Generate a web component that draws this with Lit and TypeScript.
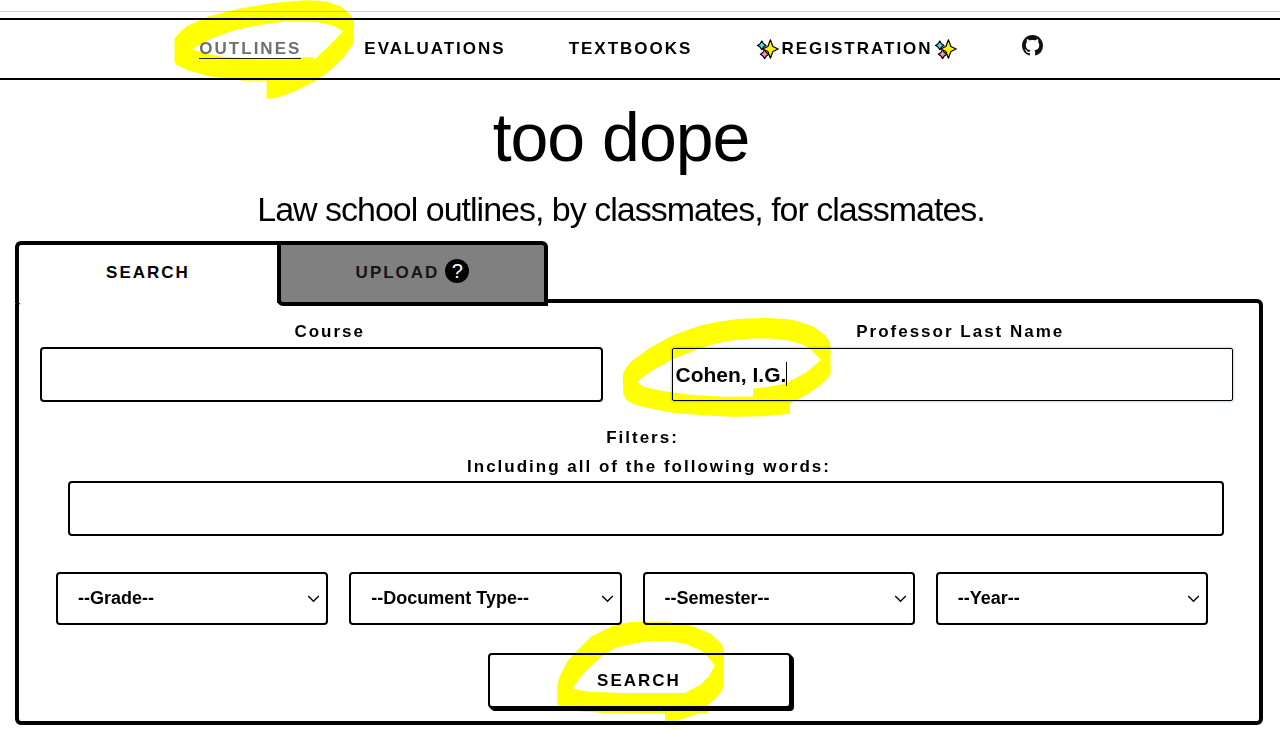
import { LitElement, html, css, svg } from "lit";
import { customElement } from "lit/decorators.js";

const outline = (points: number[][]) => "M" + points.map((p) => p.join(" ")).join("L") + "Z";

const MARKS: Record<string, string> = {
  outlines:
    outline([[39,116],[56,96],[75,80],[105,65],[140,50],[190,37],[240,25],[330,10],[430,1],[470,2],[500,6],[540,20],[570,45],[578,62],[577,132],[550,170],[510,210],[470,240],[400,275],[350,293],[335,296],[316,296],[316,243],[240,243],[240,240],[150,231],[80,212],[45,195],[39,187]]) +
    outline([[92,148],[140,120],[200,97],[250,84],[310,73],[370,65],[420,64],[480,68],[520,79],[547,94],[520,122],[500,142],[460,179],[455,172],[400,172],[370,177],[300,179],[250,175],[180,170],[130,160]]),
  professor:
    outline([[67,208],[78,187],[92,170],[150,128],[220,90],[300,62],[350,51],[410,42],[500,39],[545,41],[580,45],[640,65],[675,90],[688,108],[692,125],[692,208],[670,235],[620,270],[570,296],[570,328],[540,330],[490,335],[400,336],[330,333],[220,325],[130,308],[98,298],[80,287],[68,268]]) +
    outline([[110,232],[150,200],[220,162],[300,130],[350,115],[400,106],[450,101],[510,101],[560,106],[600,116],[630,130],[663,165],[620,202],[580,224],[540,240],[500,247],[459,252],[459,275],[370,276],[270,270],[180,258],[130,246]]),
  search:
    outline([[258,230],[264,203],[275,180],[290,152],[310,130],[360,80],[420,50],[450,41],[480,36],[590,35],[620,41],[660,47],[720,72],[750,100],[758,115],[760,135],[759,225],[752,245],[740,260],[712,285],[712,310],[680,312],[620,333],[582,333],[582,311],[400,310],[300,303],[258,285]]) +
    outline([[304,237],[320,212],[340,187],[390,140],[430,115],[490,100],[550,93],[600,95],[640,101],[690,122],[715,145],[732,168],[715,198],[690,224],[642,250],[450,250],[350,246]]),
};

const mark = (name: string) => html`
  <svg class="mark mark-${name}" viewBox="0 0 800 340" aria-hidden="true">
    <path fill="#ff0" fill-rule="evenodd" d=${MARKS[name]} />
  </svg>
`;

const star = (cx: number, cy: number, rx: number, ry: number, k: number, fill: string) => {
  const d = `M${cx} ${cy - ry}L${cx + k} ${cy - k}L${cx + rx} ${cy}L${cx + k} ${cy + k}L${cx} ${cy + ry}L${cx - k} ${cy + k}L${cx - rx} ${cy}L${cx - k} ${cy - k}Z`;
  return svg`<path d=${d} fill=${fill} stroke="#000" stroke-width="1.2" stroke-linejoin="round" />`;
};

const sparkles = () => html`
  <svg class="sparkles" viewBox="0 0 22 22" aria-hidden="true">
    ${star(4.8, 7.4, 4.2, 4.4, 1.7, "#4fe0f5")} ${star(7.6, 16.2, 4.2, 4.4, 1.7, "#ff8fb8")}
    ${star(13.4, 11, 7.8, 9.2, 2.5, "#fff200")}
  </svg>
`;

@customElement("app-root")
export class AppRoot extends LitElement {
  static styles = css`
    :host {
      display: block;
      background: #fff;
      color: #000;
      font-family: "Liberation Sans", Arial, sans-serif;
      font-size: 17px;
      font-weight: 700;
      line-height: 30px;
    }
    * {
      box-sizing: border-box;
    }
    .topline {
      height: 12px;
      border-bottom: 1px solid #d4d4d4;
      margin-bottom: 6px;
    }
    .nav {
      display: flex;
      justify-content: center;
      align-items: center;
      gap: 63px;
      height: 62px;
      padding-right: 38px;
      border-top: 2px solid #000;
      border-bottom: 2px solid #000;
      letter-spacing: 2px;
    }
    .link {
      position: relative;
      display: flex;
      align-items: center;
      color: #000;
      text-decoration: none;
    }
    .current {
      color: #707070;
    }
    .current-text {
      line-height: 18px;
      border-bottom: 1px solid #222;
    }
    .sparkles {
      width: 22px;
      height: 22px;
      margin: 0 2px;
    }
    .github {
      display: block;
      width: 21px;
      height: 21px;
      margin-bottom: 8px;
    }
    .mark {
      position: absolute;
      width: 267px;
      height: 113px;
      overflow: visible;
      pointer-events: none;
      mix-blend-mode: multiply;
    }
    .mark-outlines {
      left: -38px;
      top: -40px;
    }
    .mark-professor {
      left: -71px;
      top: -42px;
    }
    .mark-search {
      left: -17px;
      top: -43px;
    }
    .hero {
      padding: 15px 38px 0 0;
      text-align: center;
      font-weight: 400;
    }
    .title {
      margin: 0;
      font-size: 68px;
      font-weight: 400;
      line-height: 84px;
      letter-spacing: -1px;
    }
    .tagline {
      margin: 8px 0 0;
      font-size: 34px;
      line-height: 44px;
      letter-spacing: -1px;
    }
    .main {
      padding: 10px 17px 5px 15px;
    }
    .tabs {
      position: relative;
      z-index: 1;
      display: flex;
      align-items: flex-start;
      margin-bottom: -7px;
      pointer-events: none;
    }
    .tab {
      display: flex;
      justify-content: center;
      align-items: center;
      gap: 6px;
      height: 62px;
      padding: 0 0 2px;
      background: #fff;
      border: 4px solid #000;
      border-width: 4px 0 0 4px;
      border-radius: 6px 0 0 0;
      width: 262px;
      font: inherit;
      letter-spacing: 2px;
      color: #000;
      pointer-events: auto;
    }
    .tab-upload {
      width: 271px;
      height: 65px;
      background: #808080;
      border-width: 4px;
      border-radius: 0 6px 0 6px;
      color: #151515;
    }
    .help {
      width: 24px;
      height: 24px;
      margin-bottom: 3px;
      border-radius: 50%;
      background: #000;
      color: #fff;
      font-size: 20px;
      font-weight: 400;
      line-height: 24px;
      letter-spacing: 0;
    }
    .card {
      border: 4px solid #000;
      border-radius: 6px;
      padding: 14px 26px 13px 21px;
    }
    .names {
      display: grid;
      grid-template-columns: 1fr 1fr;
      gap: 68px;
    }
    .label {
      display: block;
      padding-left: 17px;
      text-align: center;
      letter-spacing: 2px;
    }
    .control {
      position: relative;
      display: flow-root;
    }
    .input {
      display: block;
      width: 100%;
      height: 55px;
      padding: 0 3px;
      background: #fff;
      border: 2px solid #000;
      border-radius: 4px;
      font: inherit;
      font-size: 21px;
      color: #000;
      outline: none;
    }
    .active {
      width: calc(100% - 1px);
      height: 53px;
      margin: 1px 0 1px 1px;
      border-width: 1px;
      border-radius: 2px;
      box-shadow: 0 0 2px 1px #bcdcea;
      caret-color: transparent;
    }
    .caret {
      position: absolute;
      left: 115px;
      top: 15px;
      width: 1px;
      height: 24px;
      background: #000;
    }
    .filters {
      margin: 21px 0 0;
      padding: 0;
      border: 0;
      text-align: center;
    }
    .legend {
      padding: 0 0 0 12px;
      margin: 0 auto;
      letter-spacing: 2px;
    }
    .words {
      padding: 0 9px 0 28px;
    }
    .words-label {
      padding-left: 6px;
      line-height: 28px;
    }
    .selects {
      display: grid;
      grid-template-columns: repeat(4, 1fr);
      gap: 21px;
      margin-top: 36px;
      padding: 0 25px 0 16px;
    }
    .select-wrap {
      position: relative;
    }
    .select {
      display: block;
      appearance: none;
      width: 100%;
      height: 53px;
      padding: 0 30px 2px 20px;
      background: #fff;
      border: 2px solid #000;
      border-radius: 4px;
      font: inherit;
      font-size: 18px;
      color: #000;
    }
    .chevron {
      position: absolute;
      right: 8px;
      top: 20px;
      width: 13px;
      height: 13px;
      pointer-events: none;
    }
    .submit-row {
      display: flex;
      justify-content: center;
      margin-top: 28px;
      padding-left: 5px;
    }
    .submit {
      width: 303px;
      height: 55px;
      padding: 0;
      background: #fff;
      border: 2px solid #000;
      border-radius: 4px;
      box-shadow: 1px 1px #000, 2px 2px #000, 3px 3px #000;
      font: inherit;
      letter-spacing: 2px;
      color: #000;
    }
  `;

  render() {
    return html`
      <div class="topline"></div>
      <nav class="nav">
        <a class="link current" href="#outlines"><span class="current-text">OUTLINES</span>${mark("outlines")}</a>
        <a class="link" href="#evaluations">EVALUATIONS</a>
        <a class="link" href="#textbooks">TEXTBOOKS</a>
        <a class="link" href="#registration">${sparkles()}REGISTRATION${sparkles()}</a>
        <a class="link" href="#github" aria-label="GitHub">
          <svg class="github" viewBox="0 0 16 16" aria-hidden="true">
            <path
              fill="#111"
              d="M8 0C3.58 0 0 3.58 0 8c0 3.54 2.29 6.53 5.47 7.59.4.07.55-.17.55-.38 0-.19-.01-.82-.01-1.49-2.01.37-2.53-.49-2.69-.94-.09-.23-.48-.94-.82-1.13-.28-.15-.68-.52-.01-.53.63-.01 1.08.58 1.23.82.72 1.21 1.87.87 2.33.66.07-.52.28-.87.51-1.07-1.78-.2-3.64-.89-3.64-3.95 0-.87.31-1.59.82-2.15-.08-.2-.36-1.02.08-2.12 0 0 .67-.21 2.2.82.64-.18 1.32-.27 2-.27s1.36.09 2 .27c1.53-1.04 2.2-.82 2.2-.82.44 1.1.16 1.92.08 2.12.51.56.82 1.27.82 2.15 0 3.07-1.87 3.75-3.65 3.95.29.25.54.73.54 1.48 0 1.07-.01 1.93-.01 2.2 0 .21.15.46.55.38A8.01 8.01 0 0 0 16 8c0-4.42-3.58-8-8-8z"
            />
          </svg>
        </a>
      </nav>
      <header class="hero">
        <h1 class="title">too dope</h1>
        <p class="tagline">Law school outlines, by classmates, for classmates.</p>
      </header>
      <main class="main">
        <div class="tabs">
          <button class="tab" type="button">SEARCH</button>
          <button class="tab tab-upload" type="button">UPLOAD<span class="help">?</span></button>
        </div>
        <form class="card" @submit=${(e: Event) => e.preventDefault()}>
          <div class="names">
            <div>
              <label class="label" for="course">Course</label>
              <input class="input" id="course" type="text" />
            </div>
            <div>
              <label class="label" for="professor">Professor Last Name</label>
              <div class="control">
                <input class="input active" id="professor" type="text" value="Cohen, I.G." />
                <span class="caret"></span>
                ${mark("professor")}
              </div>
            </div>
          </div>
          <fieldset class="filters">
            <legend class="legend">Filters:</legend>
            <div class="words">
              <label class="label words-label" for="words">Including all of the following words:</label>
              <input class="input" id="words" type="text" />
            </div>
            <div class="selects">
              ${["Grade", "Document Type", "Semester", "Year"].map(
                (name) => html`
                  <div class="select-wrap">
                    <select class="select" aria-label=${name}>
                      <option>--${name}--</option>
                    </select>
                    <svg class="chevron" viewBox="0 0 13 13" aria-hidden="true">
                      <path d="M1.2 4L6.5 9.3L11.8 4" fill="none" stroke="#000" stroke-width="1.4" />
                    </svg>
                  </div>
                `
              )}
            </div>
          </fieldset>
          <div class="submit-row">
            <div class="control">
              <button class="submit" type="submit">SEARCH</button>
              ${mark("search")}
            </div>
          </div>
        </form>
      </main>
    `;
  }
}
